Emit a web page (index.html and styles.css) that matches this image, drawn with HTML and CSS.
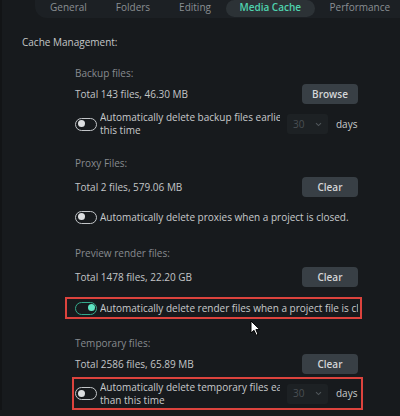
FILE: index.html
```html
<!DOCTYPE html>
<html>
<head>
<meta charset="utf-8">
<link rel="stylesheet" href="styles.css">
</head>
<body>
<div class="page">
  <nav class="tabbar">
    <span class="tab">General</span>
    <span class="tab">Folders</span>
    <span class="tab">Editing</span>
    <span class="tab active">Media Cache</span>
    <span class="tab">Performance</span>
  </nav>
  <main class="content">
    <div class="heading">Cache Management:</div>

    <section class="group g-backup">
      <div class="label">Backup files:</div>
      <div class="row r-tight">
        <span class="value">Total 143 files, 46.30 MB</span>
        <button class="btn">Browse</button>
      </div>
      <div class="opt opt-days o-backup">
        <span class="toggle"></span>
        <div class="opt-text clip"><span class="ln">Automatically delete backup files earlier than</span><br><span class="ln">this time</span></div>
        <div class="select"><span>30</span><svg class="chev" width="7" height="5" viewBox="0 0 7 5"><path d="M1 1.2 L3.5 3.6 L6 1.2" fill="none" stroke="#4f555a" stroke-width="1.1"/></svg></div>
        <span class="days">days</span>
      </div>
    </section>

    <section class="group g-proxy">
      <div class="label">Proxy Files:</div>
      <div class="row">
        <span class="value">Total 2 files, 579.06 MB</span>
        <button class="btn">Clear</button>
      </div>
      <div class="opt o-proxy">
        <span class="toggle"></span>
        <div class="opt-text">Automatically delete proxies when a project is closed.</div>
      </div>
    </section>

    <section class="group g-preview">
      <div class="label">Preview render files:</div>
      <div class="row">
        <span class="value">Total 1478 files, 22.20 GB</span>
        <button class="btn">Clear</button>
      </div>
      <div class="opt boxed o-preview">
        <span class="toggle on"></span>
        <div class="opt-text fill">Automatically delete render files when a project file is closed.</div>
      </div>
    </section>

    <section class="group g-temp">
      <div class="label">Temporary files:</div>
      <div class="row r-tight">
        <span class="value">Total 2586 files, 65.89 MB</span>
        <button class="btn">Clear</button>
      </div>
      <div class="opt opt-days boxed o-temp">
        <span class="toggle"></span>
        <div class="opt-text clip"><span class="ln">Automatically delete temporary files earlier</span><br><span class="ln">than this time</span></div>
        <div class="select"><span>30</span><svg class="chev" width="7" height="5" viewBox="0 0 7 5"><path d="M1 1.2 L3.5 3.6 L6 1.2" fill="none" stroke="#4f555a" stroke-width="1.1"/></svg></div>
        <span class="days">days</span>
      </div>
    </section>
  </main>
  <svg class="cursor" width="12" height="17" viewBox="0 0 12 17"><path d="M1 1 L1 13 L4 10.3 L6.2 15.2 L8 14.4 L5.9 9.6 L9.8 9.6 Z" fill="#ffffff" stroke="#000000" stroke-width="1" stroke-linejoin="round"/></svg>
</div>
</body>
</html>
```

FILE: styles.css
```css
* { box-sizing: border-box; }
html, body {
  margin: 0;
  padding: 0;
  background: #171a1d;
}
body {
  font-family: "Open Sans", "Noto Sans", sans-serif;
  font-size: 10px;
  color: #c6c8ca;
  width: 400px;
  height: 416px;
  overflow: hidden;
}
.page {
  position: relative;
  height: 416px;
  border-left: 2px solid #121416;
}
.tabbar {
  display: flex;
  gap: 1px;
  margin-top: -6px;
  margin-left: 33px;
  height: 24px;
  padding: 6px 0 1px 1px;
  background: #1c2024;
  border-radius: 0 0 0 12px;
  white-space: nowrap;
}
.tab {
  padding: 0 14px;
  height: 17px;
  line-height: 15px;
  color: #8a8f93;
  border-radius: 9px;
  font-size: 10px;
}
.tab.active {
  background: #2c3236;
  color: #4fd2ae;
  font-weight: 600;
  padding: 0 13.5px;
}
.content {
  padding-left: 20px;
}
.heading {
  margin-top: 17px;
  line-height: 14px;
  color: #c4c6c8;
}
.group {
  padding-left: 53px;
  width: 336px;
}
.g-backup { margin-top: 17px; }
.g-proxy { margin-top: 19px; }
.g-preview { margin-top: 22px; }
.g-temp { margin-top: 17px; }
.label {
  line-height: 14px;
  color: #878b8f;
}
.row {
  display: flex;
  justify-content: space-between;
  align-items: center;
  height: 20px;
  margin-top: 7px;
}
.row.r-tight { margin-top: 4px; }
.value { color: #c3c5c7; }
.btn {
  width: 56px;
  height: 20px;
  border: 0;
  border-radius: 4px;
  background: #383f45;
  color: #d4d6d8;
  font-family: inherit;
  font-size: 10px;
  font-weight: 600;
  padding: 0;
}
.opt {
  display: flex;
  align-items: center;
  line-height: 13px;
  color: #c8cacc;
}
.toggle {
  flex: none;
  position: relative;
  width: 22px;
  height: 13px;
  border: 1.5px solid #c2c5c8;
  border-radius: 7px;
  margin-right: 3px;
}
.toggle::after {
  content: "";
  position: absolute;
  left: 1.5px;
  top: 1.5px;
  width: 7px;
  height: 7px;
  border-radius: 50%;
  background: #dcdee0;
}
.toggle.on { border-color: #35a98b; }
.toggle.on::after {
  left: auto;
  right: 1.5px;
  background: #5fe6c3;
}
.opt-text { white-space: nowrap; }
.opt-text.clip {
  width: 180px;
  overflow: hidden;
  flex: none;
}
.opt-text.fill {
  flex: 1;
  min-width: 0;
  overflow: hidden;
}
.o-backup { margin-top: 7px; height: 26px; }
.o-proxy { margin-top: 13px; height: 14px; }
.select {
  flex: none;
  display: flex;
  align-items: center;
  justify-content: space-between;
  width: 41px;
  height: 20px;
  margin-left: 7px;
  padding: 0 6px 0 6px;
  background: #1d2124;
  border-radius: 3px;
  color: #4a4f53;
}
.chev { display: block; }
.days {
  margin-left: 8px;
  color: #c8cacc;
}
.boxed {
  border: 2px solid #dc433d;
}
.o-preview {
  margin-top: 10px;
  margin-left: -10px;
  margin-right: -4px;
  height: 22px;
  padding: 0 2px 0 8px;
}
.o-temp {
  margin-top: 3px;
  margin-left: -3px;
  margin-right: -5px;
  height: 33px;
  padding: 0 4px 0 1px;
}
.cursor {
  position: absolute;
  left: 248px;
  top: 326px;
}
```
